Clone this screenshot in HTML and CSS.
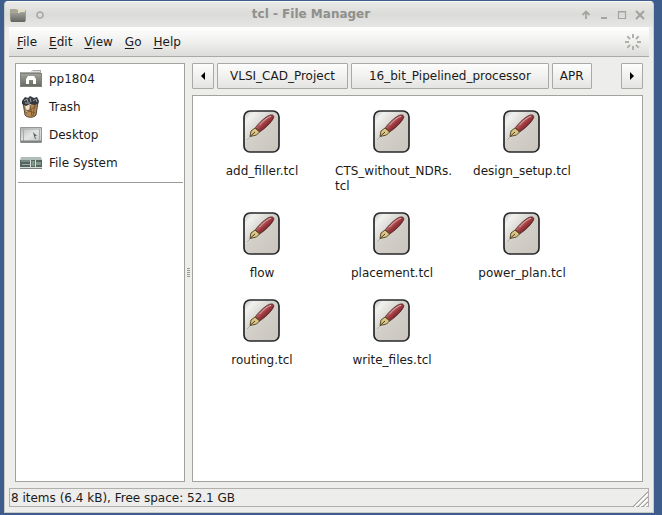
FILE: index.html
```html
<!DOCTYPE html>
<html lang="en">
<head>
<meta charset="utf-8">
<title>tcl - File Manager</title>
<link rel="stylesheet" href="styles.css">
</head>
<body>
<svg class="defs" width="0" height="0" aria-hidden="true">
  <defs>
    <linearGradient id="paper" x1="0" y1="0" x2="1" y2="1">
      <stop offset="0" stop-color="#b9b9b7"/><stop offset=".16" stop-color="#f1f1ef"/><stop offset=".45" stop-color="#d3d0c9"/><stop offset="1" stop-color="#c9c5bd"/>
    </linearGradient>
    <linearGradient id="pen" x1="0" y1="0" x2="1" y2="1">
      <stop offset=".3" stop-color="#c98080"/><stop offset=".5" stop-color="#a13a40"/><stop offset=".75" stop-color="#5c1c21"/>
    </linearGradient>
    <linearGradient id="folder" x1="0" y1="0" x2="0" y2="1">
      <stop offset="0" stop-color="#a3a49c"/><stop offset="1" stop-color="#63655f"/>
    </linearGradient>
    <linearGradient id="screen" x1="0" y1="0" x2="1" y2="1">
      <stop offset="0" stop-color="#b5b8b8"/><stop offset=".5" stop-color="#e4e5e5"/><stop offset="1" stop-color="#bfc1c1"/>
    </linearGradient>
    <symbol id="script" viewBox="0 0 48 48">
      <rect x="6" y="4" width="35" height="41" rx="6" fill="url(#paper)" stroke="#26282a" stroke-width="1.7"/>
      <path d="M9 33 L12 30" stroke="#b0b0ad" stroke-width="1"/>
      <path d="M17.500 20.500 C21 16 27 10 31.500 8.300 C34.500 7.300 36.500 8.500 35.500 11 C33 16 27 21.500 21.500 25Z" fill="url(#pen)" stroke="#43181b" stroke-width=".8"/>
      <path d="M21.500 18 C25.500 13.500 30 10 33 9.300" fill="none" stroke="#dfb0ad" stroke-width="1"/>
      <path d="M17 21 L21.500 25 L18.500 28 L12 29.500 L13 24Z" fill="#dcc485" stroke="#5b4d2c" stroke-width="1"/>
      <path d="M12 29.500 L17 25" stroke="#4a3e24" stroke-width="1"/>
    </symbol>
  </defs>
</svg>
<div class="window">
  <header class="titlebar">
    <svg class="title-folder" width="18" height="16" viewBox="0 0 18 16" aria-hidden="true">
      <path d="M1 14V2h6l2 1h8v11z" fill="#aaa697"/><path d="M9 2h7v7H9z" fill="#e3dfc8"/><path d="M1 6h9l2-1h5l-1 10H2z" fill="url(#folder)"/>
    </svg>
    <svg class="title-dot" width="10" height="10" viewBox="0 0 10 10" aria-hidden="true"><circle cx="5" cy="5" r="3" fill="none" stroke="#aaa9a5" stroke-width="1.600"/></svg>
    <h1 class="title">tcl - File Manager</h1>
    <div class="window-buttons">
      <button type="button" aria-label="Shade"><svg width="10" height="10" viewBox="0 0 10 10"><path d="M5 9V2M1.500 5L5 1.500L8.500 5" fill="none" stroke="#a5a49f" stroke-width="1.800"/></svg></button>
      <button type="button" aria-label="Minimize"><svg width="10" height="10" viewBox="0 0 10 10"><path d="M2 8h6" stroke="#a5a49f" stroke-width="2"/></svg></button>
      <button type="button" aria-label="Maximize"><svg width="10" height="10" viewBox="0 0 10 10"><path d="M1.500 1.500h7v7h-7zM1 2h8" fill="none" stroke="#a5a49f" stroke-width="1.200"/></svg></button>
      <button type="button" aria-label="Close"><svg width="10" height="10" viewBox="0 0 10 10"><path d="M1 1l8 8M9 1L1 9" stroke="#a09f9a" stroke-width="1.800"/></svg></button>
    </div>
  </header>
  <div class="body">
    <nav class="menubar">
      <button type="button"><u>F</u>ile</button>
      <button type="button"><u>E</u>dit</button>
      <button type="button"><u>V</u>iew</button>
      <button type="button"><u>G</u>o</button>
      <button type="button"><u>H</u>elp</button>
      <svg class="throbber" width="18" height="18" viewBox="0 0 18 18" aria-hidden="true">
        <g stroke="#b0afa9" stroke-width="2"><path d="M9 1v4M9 13v4M1 9h4M13 9h4M3.300 3.300l2.800 2.800M11.900 11.900l2.800 2.800M14.700 3.300l-2.800 2.800M6.100 11.900l-2.800 2.800"/></g>
      </svg>
    </nav>
    <main class="panes">
      <aside class="places">
        <ul>
          <li><a href="#home"><svg width="22" height="22" viewBox="0 0 22 22" aria-hidden="true">
            <path d="M0 4h11l2-2h8v4H0z" fill="#a5aaa7"/><path d="M12 3h8v1h-8z" fill="#dfe2e0"/><path d="M0 5h22v14H0z" fill="url(#folder)"/><path d="M.5 5.500h21v13H.500z" fill="none" stroke="#7d827d"/><path d="M6 11l2-3h6l2 3v5h-3v-4h-4v4H6z" fill="#fff"/></svg>pp1804</a></li>
          <li><a href="#trash"><svg width="22" height="22" viewBox="0 0 22 22" aria-hidden="true">
            <path d="M3 6l2 13c2 3 9 3 11 0l2-13z" fill="#b68a55" stroke="#55442f"/><path d="M5 9l6-1-4 9z" fill="#ede5d5"/><path d="M10 9l2 11M15 8l-2 12M6 14l9 3M6 17l10-7" stroke="#7a5832" fill="none"/><path d="M2 5l3-4 3 1 2-2 4 2 3-1 2 4-1 3-4 1-4-1-4 2-4-2z" fill="#343940"/><path d="M4 5l3-2 1 3M10 2l1 4M13 5l3-2 1 3M5 7l5 0" stroke="#a3a8b0" fill="none"/></svg>Trash</a></li>
          <li><a href="#desktop"><svg width="22" height="22" viewBox="0 0 22 22" aria-hidden="true">
            <path d="M.5 3.500h21v15H.500z" fill="url(#screen)" stroke="#929696"/><path d="M1 5h20M3.500 5v12M19.500 5v12" stroke="#a7abab"/><path d="M1 17.500h20" stroke="#7f8383" stroke-width="2"/><path d="M13 8l4 4-2 0 1 3-1 0-1-3z" fill="#5c6060"/></svg>Desktop</a></li>
          <li><a href="#filesystem"><svg width="22" height="22" viewBox="0 0 22 22" aria-hidden="true">
            <path d="M1 5h20l1 3v8H0V8z" fill="#b1bdb7"/><path d="M0 8h22v8H0z" fill="#53655e"/><path d="M1 9h9M2 12.500h8" stroke="#9eafa7"/><path d="M11.500 9h3v5h-3zM16 10h5v3h-5z" fill="#81978c"/><path d="M10.500 8v7M15.500 8v7M0 15.500h22" stroke="#d4dcd8"/><path d="M0 16.500h22" stroke="#77817c"/></svg>File System</a></li>
        </ul>
        <hr>
      </aside>
      <div class="splitter"><i></i><i></i><i></i><i></i><i></i></div>
      <section class="browser">
        <nav class="pathbar" aria-label="Path">
          <button type="button" class="arrow" aria-label="Back"><svg width="6" height="8" viewBox="0 0 6 8"><path d="M5 0v8L1 4z" fill="#000"/></svg></button>
          <button type="button" class="crumb wide">VLSI_CAD_Project</button>
          <button type="button" class="crumb wider">16_bit_Pipelined_processor</button>
          <button type="button" class="crumb">APR</button>
          <button type="button" class="arrow end" aria-label="Forward"><svg width="6" height="8" viewBox="0 0 6 8"><path d="M1 0v8l4-4z" fill="#000"/></svg></button>
        </nav>
        <ul class="files">
          <li><svg class="icon" aria-hidden="true"><use href="#script"/></svg><span>add_filler.tcl</span></li>
          <li><svg class="icon" aria-hidden="true"><use href="#script"/></svg><span>CTS_without_NDRs.<wbr>tcl</span></li>
          <li><svg class="icon" aria-hidden="true"><use href="#script"/></svg><span>design_setup.tcl</span></li>
          <li><svg class="icon" aria-hidden="true"><use href="#script"/></svg><span>flow</span></li>
          <li><svg class="icon" aria-hidden="true"><use href="#script"/></svg><span>placement.tcl</span></li>
          <li><svg class="icon" aria-hidden="true"><use href="#script"/></svg><span>power_plan.tcl</span></li>
          <li><svg class="icon" aria-hidden="true"><use href="#script"/></svg><span>routing.tcl</span></li>
          <li><svg class="icon" aria-hidden="true"><use href="#script"/></svg><span>write_files.tcl</span></li>
        </ul>
      </section>
    </main>
    <footer class="statusbar">
      <span>8 items (6.4 kB), Free space: 52.1 GB</span>
      <svg width="16" height="17" viewBox="0 0 16 17" aria-hidden="true"><g stroke-width="1.300"><path d="M1 17L16 2M6 17L16 7M11 17l5-5" stroke="#999893"/><path d="M2.500 17L16 3.500M7.500 17L16 8.500M12.500 17l3.500-3.500" stroke="#fff"/></g></svg>
    </footer>
  </div>
</div>
</body>
</html>
```
FILE: styles.css
```css
* { box-sizing: border-box; }

body {
  margin: 0;
  height: 100vh;
  padding: 1px 8px 2px 4px;
  background: #3e5c8c;
  color: #1a1a1a;
  font: 12px/15px "DejaVu Sans", sans-serif;
}

ul { list-style: none; margin: 0; padding: 0; }
button { font: inherit; color: inherit; margin: 0; }
svg { display: block; flex: none; }
.defs { position: absolute; }

.window {
  height: 100%;
  display: flex;
  flex-direction: column;
  background: #ededeb;
  border: 1px solid #c9c9c5;
  border-top-color: #f8f8f7;
  border-radius: 4px 4px 0 0;
}

.titlebar {
  height: 25px;
  flex: none;
  display: flex;
  align-items: center;
  padding: 0 8px 0 4px;
  border-radius: 4px 4px 0 0;
  background: linear-gradient(#e9e9e7, #dbdbd9 50%, #e6e6e4);
}
.title-dot { margin-left: 8px; }
.title {
  flex: 1;
  margin: 0;
  padding-right: 4px;
  text-align: center;
  font-size: 12px;
  color: #8f8f8c;
}
.window-buttons { display: flex; gap: 8px; }
.window-buttons button { padding: 0; border: 0; background: none; }

.body {
  flex: 1;
  min-height: 0;
  display: flex;
  flex-direction: column;
  padding: 0 4px 5px;
}

.menubar {
  height: 30px;
  flex: none;
  display: flex;
  align-items: center;
  gap: 12px;
  padding: 1px 7px 0 8px;
  background: linear-gradient(#fff, #f0f0ef 50%, #dcdcda);
  border-bottom: 1px solid #aaa9a6;
}
.menubar button { padding: 0; border: 0; background: none; }
.menubar u { text-underline-offset: 2px; }
.throbber { margin-left: auto; }

.panes { flex: 1; min-height: 0; display: flex; padding: 6px; }

.places {
  width: 170px;
  flex: none;
  padding: 1px;
  background: #fff;
  border: 1px solid #a3a29d;
}
.places a {
  height: 28px;
  display: flex;
  align-items: center;
  gap: 7px;
  padding-left: 3px;
  color: inherit;
  text-decoration: none;
}
.places hr { margin: 5px 0 0 1px; border: 0; border-top: 1px solid #9b9a96; }

.splitter {
  width: 7px;
  flex: none;
  display: flex;
  flex-direction: column;
  align-items: center;
  justify-content: center;
  gap: 1px;
}
.splitter i { width: 3px; height: 1px; background: #999; }

.browser { flex: 1; min-width: 0; display: flex; flex-direction: column; gap: 6px; }

.pathbar { display: flex; gap: 3px; }
.pathbar button {
  height: 26px;
  padding: 0 7px;
  border: 1px solid #aaa9a5;
  border-radius: 1px;
  background: linear-gradient(#fdfdfd, #f1f1f0 50%, #e4e4e2);
}
.pathbar .arrow { width: 22px; display: flex; align-items: center; justify-content: center; }
.pathbar .wide { padding: 0 12px; }
.pathbar .wider { padding: 0 17px; }
.pathbar .end { margin-left: auto; }

.files {
  flex: 1;
  min-height: 0;
  display: grid;
  grid-template-columns: repeat(auto-fill, 130px);
  align-content: start;
  row-gap: 15px;
  padding: 11px 4px;
  background: #fff;
  border: 1px solid #a3a29d;
}
.files li { display: flex; flex-direction: column; align-items: center; gap: 9px; }
.files span { max-width: 114px; }
.icon { width: 48px; height: 48px; }

.statusbar {
  height: 19px;
  flex: none;
  display: flex;
  align-items: center;
  justify-content: space-between;
  padding: 1px 0 0 1px;
  border: 1px solid #b0afab;
}
```
